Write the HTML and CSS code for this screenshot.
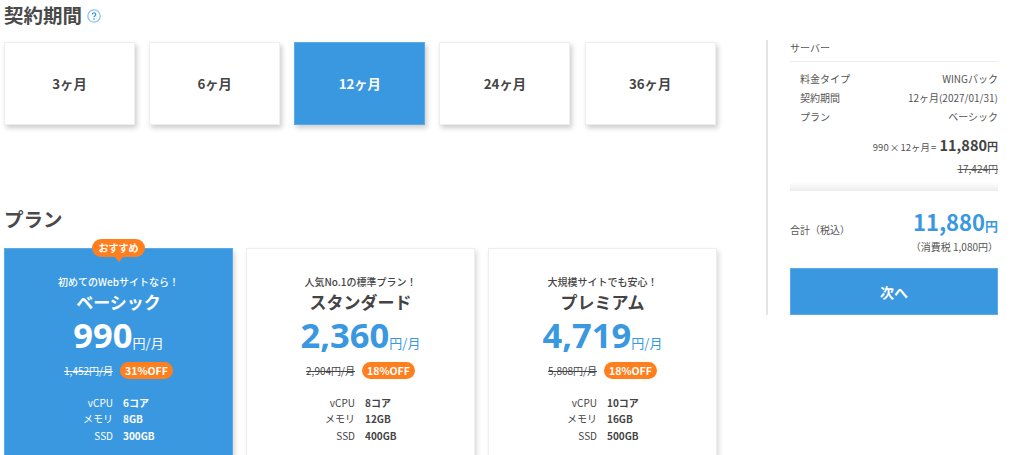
FILE: index.html
```html
<!DOCTYPE html>
<html lang="ja">
<head>
<meta charset="utf-8">
<title>契約期間</title>
<link rel="stylesheet" href="styles.css">
</head>
<body>
<div class="page">
  <main class="main">
    <h2 class="heading">契約期間
      <svg class="help" viewBox="0 0 14 14" width="14" height="14"><circle cx="7" cy="7" r="6.2" fill="none" stroke="#8fc1ee" stroke-width="1.3"/><path d="M5.3 5.6a1.7 1.7 0 1 1 2.6 1.4c-.6.4-.9.7-.9 1.3" fill="none" stroke="#3a98e0" stroke-width="1.2"/><circle cx="7" cy="10.1" r=".8" fill="#3a98e0"/></svg>
    </h2>
    <div class="terms">
      <div class="term">3ヶ月</div>
      <div class="term">6ヶ月</div>
      <div class="term active">12ヶ月</div>
      <div class="term">24ヶ月</div>
      <div class="term">36ヶ月</div>
    </div>
    <h2 class="heading plan-heading">プラン</h2>
    <div class="plans">
      <article class="plan selected">
        <span class="badge">おすすめ</span>
        <p class="tag">初めてのWebサイトなら！</p>
        <h3 class="name">ベーシック</h3>
        <p class="price"><b>990</b><span>円/月</span></p>
        <p class="old"><s>1,452円/月</s><em>31%OFF</em></p>
        <dl class="spec">
          <dt>vCPU</dt><dd>6コア</dd>
          <dt>メモリ</dt><dd>8GB</dd>
          <dt>SSD</dt><dd>300GB</dd>
        </dl>
      </article>
      <article class="plan">
        <p class="tag">人気No.1の標準プラン！</p>
        <h3 class="name">スタンダード</h3>
        <p class="price"><b>2,360</b><span>円/月</span></p>
        <p class="old"><s>2,904円/月</s><em>18%OFF</em></p>
        <dl class="spec">
          <dt>vCPU</dt><dd>8コア</dd>
          <dt>メモリ</dt><dd>12GB</dd>
          <dt>SSD</dt><dd>400GB</dd>
        </dl>
      </article>
      <article class="plan">
        <p class="tag">大規模サイトでも安心！</p>
        <h3 class="name">プレミアム</h3>
        <p class="price"><b>4,719</b><span>円/月</span></p>
        <p class="old"><s>5,808円/月</s><em>18%OFF</em></p>
        <dl class="spec">
          <dt>vCPU</dt><dd>10コア</dd>
          <dt>メモリ</dt><dd>16GB</dd>
          <dt>SSD</dt><dd>500GB</dd>
        </dl>
      </article>
    </div>
  </main>
  <aside class="side">
    <div class="side-title">サーバー</div>
    <dl class="rows">
      <dt>料金タイプ</dt><dd>WINGパック</dd>
      <dt>契約期間</dt><dd>12ヶ月(2027/01/31)</dd>
      <dt>プラン</dt><dd>ベーシック</dd>
    </dl>
    <p class="calc"><span class="expr">990 × 12ヶ月 = </span><b>11,880</b><span class="yen">円</span></p>
    <p class="was"><s>17,424円</s></p>
    <div class="fade"></div>
    <div class="total">
      <span class="total-label">合計（税込）</span>
      <div class="total-right">
        <p class="total-price"><b>11,880</b><span>円</span></p>
        <p class="tax">（消費税 1,080円）</p>
      </div>
    </div>
    <button class="next">次へ</button>
  </aside>
</div>
</body>
</html>
```

FILE: styles.css
```css
* { box-sizing: border-box; }
html, body { margin: 0; height: 455px; overflow: hidden; background: #fff; }
body { font-family: "Noto Sans CJK JP", "Noto Sans", sans-serif; color: #444; }
p, h2, h3, dl, dd { margin: 0; }
.page { display: flex; align-items: flex-start; height: 455px; overflow: hidden; }
.main { width: 766px; flex: none; padding-left: 4px; }
.heading { display: flex; align-items: center; gap: 5px; height: 29px; font-size: 19.5px; line-height: 29px; font-weight: 700; color: #4a4a4a; }
.help { margin-top: 2px; }
.terms { display: flex; gap: 14.15px; margin-top: 13px; }
.term { width: 131px; height: 83px; display: flex; align-items: center; justify-content: center; background: #fff; border: 1px solid #eee; box-shadow: 2px 3px 5px rgba(0,0,0,.2); font-size: 13.3px; font-weight: 700; color: #444; }
.term.active { background: #3a98e0; border-color: #5aaae8; color: #fff; }
.plan-heading { margin-top: 79px; }
.plans { display: flex; gap: 13px; margin-top: 15px; }
.plan { position: relative; width: 229px; height: 260px; flex: none; padding-top: 25px; background: #fff; border: 1px solid #eee; box-shadow: 2px 3px 5px rgba(0,0,0,.15); text-align: center; color: #444; }
.plan.selected { background: #3a98e0; border-color: #5aaae8; color: #fff; }
.badge { position: absolute; top: -10px; left: 50%; margin-left: -26.5px; width: 53px; height: 18px; border-radius: 9px; background: #ff7f1e; color: #fff; font-size: 10px; line-height: 18px; font-weight: 700; }
.badge::after { content: ""; position: absolute; left: 50%; bottom: -5px; margin-left: -4px; border: 4px solid transparent; border-bottom: 0; border-top: 5px solid #ff7f1e; }
.tag { font-size: 10px; line-height: 16px; font-weight: 500; }
.name { font-size: 17px; line-height: 22px; margin-top: 1px; font-weight: 700; }
.price { display: flex; align-items: baseline; justify-content: center; line-height: 44px; height: 44px; color: #3a98e0; }
.selected .price { color: #fff; }
.price b { font-size: 34.5px; font-weight: 700; font-family: "Noto Sans", sans-serif; }
.price span { font-size: 13px; }
.old { display: flex; align-items: center; justify-content: center; gap: 7px; margin-top: 4px; height: 18px; font-size: 10px; }
.old s { color: inherit; }
.old em { width: 53px; height: 17px; border-radius: 9px; background: #ff7f1e; color: #fff; font-style: normal; font-weight: 700; font-size: 10.5px; line-height: 17px; }
.spec { display: grid; grid-template-columns: 108px 1fr; column-gap: 10px; margin-top: 16px; font-size: 10px; line-height: 16.3px; text-align: left; }
.spec dt { text-align: right; }
.spec dd { font-weight: 700; }
.side { width: 258px; flex: none; margin-top: 40px; height: 275px; padding: 0 26px 0 22px; border-left: 2px solid #e4e4e4; font-size: 10px; color: #555; }
.side-title { height: 22px; border-bottom: 1px solid #eee; line-height: 15px; font-size: 10px; }
.rows { display: grid; grid-template-columns: auto 1fr; row-gap: 3px; padding: 9px 0 0 10px; line-height: 16px; }
.rows dd { text-align: right; }
.calc { display: flex; align-items: baseline; justify-content: flex-end; margin-top: 8px; height: 24px; line-height: 24px; font-size: 9.5px; white-space: pre; }
.expr { word-spacing: -1px; }
.calc b { font-size: 14.5px; color: #444; margin-left: 2px; }
.calc .yen { font-size: 11px; font-weight: 700; color: #444; }
.was { text-align: right; margin-top: 4px; line-height: 16px; }
.fade { height: 9px; margin-top: 5px; background: linear-gradient(#fff, #ececec); }
.total { display: flex; justify-content: space-between; align-items: center; margin-top: 17.5px; }
.total-label { font-size: 10px; margin-bottom: 5px; }
.total-right { text-align: right; padding-left: 1px; }
.total-price { color: #3a98e0; line-height: 25px; }
.total-price b { font-size: 22px; font-weight: 700; }
.total-price span { font-size: 13px; font-weight: 700; }
.tax { line-height: 16px; font-size: 10px; }
.next { display: block; width: 100%; height: 47px; margin-top: 13.5px; background: #3a98e0; border: 1px solid #5aaae8; color: #fff; font: 700 14px "Noto Sans CJK JP", sans-serif; }
```
